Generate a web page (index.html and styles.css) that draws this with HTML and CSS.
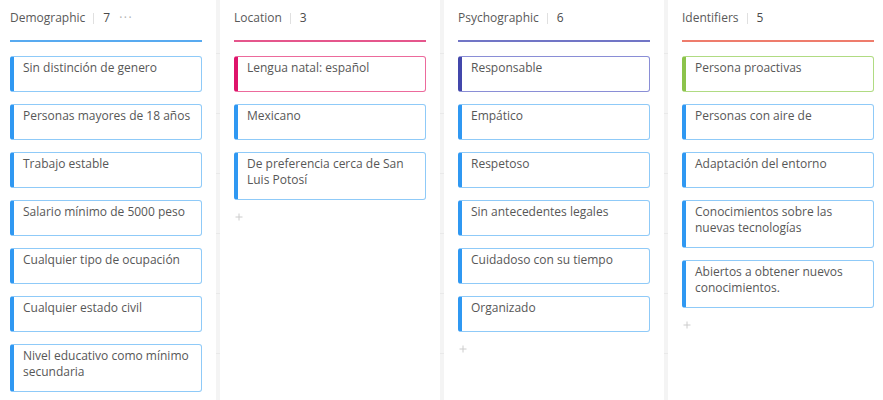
FILE: index.html
```html
<!DOCTYPE html>
<html lang="es">
<head>
<meta charset="utf-8">
<title>Board</title>
<link rel="stylesheet" href="styles.css">
</head>
<body>
<div class="board">
  <section class="column col-demo">
    <header class="col-head">
      <span class="col-title">Demographic</span>
      <span class="sep"></span>
      <span class="count">7</span>
      <span class="more">···</span>
    </header>
    <div class="cards">
      <div class="card">Sin distinción de genero</div>
      <div class="card">Personas mayores de 18 años</div>
      <div class="card">Trabajo estable</div>
      <div class="card">Salario mínimo de 5000 peso</div>
      <div class="card">Cualquier tipo de ocupación</div>
      <div class="card">Cualquier estado civil</div>
      <div class="card">Nivel educativo como mínimo secundaria</div>
    </div>
  </section>
  <section class="column col-loc">
    <header class="col-head">
      <span class="col-title">Location</span>
      <span class="sep"></span>
      <span class="count">3</span>
    </header>
    <div class="cards">
      <div class="card card-pink">Lengua natal: español</div>
      <div class="card">Mexicano</div>
      <div class="card">De preferencia cerca de San Luis Potosí</div>
      <div class="add"><svg width="8" height="8" viewBox="0 0 8 8"><path d="M4 0.5V7.5M0.5 4H7.5" stroke="#cccccc" stroke-width="1"/></svg></div>
    </div>
  </section>
  <section class="column col-psy">
    <header class="col-head">
      <span class="col-title">Psychographic</span>
      <span class="sep"></span>
      <span class="count">6</span>
    </header>
    <div class="cards">
      <div class="card card-indigo">Responsable</div>
      <div class="card">Empático</div>
      <div class="card">Respetoso</div>
      <div class="card">Sin antecedentes legales</div>
      <div class="card">Cuidadoso con su tiempo</div>
      <div class="card">Organizado</div>
      <div class="add"><svg width="8" height="8" viewBox="0 0 8 8"><path d="M4 0.5V7.5M0.5 4H7.5" stroke="#cccccc" stroke-width="1"/></svg></div>
    </div>
  </section>
  <section class="column col-id">
    <header class="col-head">
      <span class="col-title">Identifiers</span>
      <span class="sep"></span>
      <span class="count">5</span>
    </header>
    <div class="cards">
      <div class="card card-green">Persona proactivas</div>
      <div class="card">Personas con aire de</div>
      <div class="card">Adaptación del entorno</div>
      <div class="card">Conocimientos sobre las nuevas tecnologías</div>
      <div class="card">Abiertos a obtener nuevos conocimientos.</div>
      <div class="add"><svg width="8" height="8" viewBox="0 0 8 8"><path d="M4 0.5V7.5M0.5 4H7.5" stroke="#cccccc" stroke-width="1"/></svg></div>
    </div>
  </section>
</div>
</body>
</html>
```
FILE: styles.css
```css
* { box-sizing: border-box; }

html, body {
  margin: 0;
  height: 100%;
}

body {
  background-color: #f4f4f4;
  background-image: linear-gradient(#e9e9e9 1px, transparent 1px);
  background-size: 100% 60px;
  background-position: 0 53px;
  font-family: "Open Sans", "Liberation Sans", sans-serif;
  font-size: 12px;
  color: #595959;
  overflow: hidden;
}

.board {
  display: flex;
  gap: 4px;
  margin-left: -4px;
  height: 100%;
}

.column {
  flex: 0 0 220px;
  width: 220px;
  background: #fff;
  padding: 0 14px;
  height: 100%;
}

.col-head {
  display: flex;
  align-items: center;
  height: 42px;
  padding-bottom: 14px;
  padding-top: 10px;
  line-height: 16px;
  border-bottom: 2px solid #58aaf0;
  color: #595959;
}

.col-loc .col-head { border-bottom-color: #e5568c; }
.col-psy .col-head { border-bottom-color: #7175c6; }
.col-id .col-head { border-bottom-color: #ee7c6c; }

.sep {
  width: 1px;
  height: 11px;
  background: #e0e0e0;
  margin: 0 9px 0 8px;
}

.count { color: #4a4a4a; }

.more {
  margin-left: 9px;
  color: #b0b0b0;
  letter-spacing: 1.5px;
  font-size: 12px;
}

.cards {
  display: flex;
  flex-direction: column;
  gap: 12px;
  margin-top: 14px;
}

.card {
  min-height: 36px;
  padding: 3px 8px 11px 9px;
  line-height: 16px;
  color: #575757;
  background: #fff;
  border: 1px solid #8fcaf8;
  border-left: 4px solid #2f98f2;
  border-radius: 3px;
}

.card-pink {
  border-color: #ec6a9c;
  border-left-color: #de146b;
}

.card-indigo {
  border-color: #8a8ed6;
  border-left-color: #4347ab;
}

.card-green {
  border-color: #b0db82;
  border-left-color: #8cc34b;
}

.add {
  height: 10px;
  padding: 1px 0 0 1px;
  line-height: 0;
}
```
